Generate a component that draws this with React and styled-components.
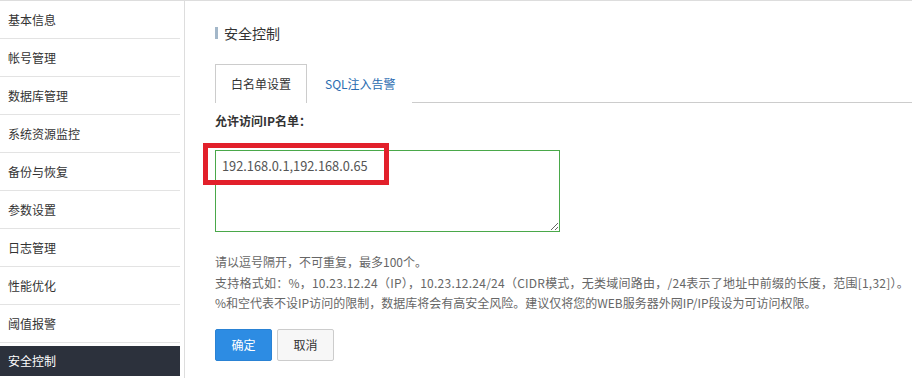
import React from 'react'
import styled, { createGlobalStyle } from 'styled-components'

const GlobalStyle = createGlobalStyle`
  body {
    margin: 0;
    background: #fff;
    font-family: 'Noto Sans CJK SC', 'Noto Sans', sans-serif;
    color: #333;
  }
`

const Page = styled.div`
  display: flex;
  width: 912px;
  border-top: 1px solid #dddddd;
  align-items: flex-start;
`

const Sidebar = styled.ul`
  list-style: none;
  margin: 0;
  padding: 0 4px 2px 0;
  width: 180px;
  border-right: 1px solid #dddddd;
`

const MenuItem = styled.li`
  height: ${(p) => (p.active ? '30px' : '37px')};
  line-height: ${(p) => (p.active ? '30px' : '37px')};
  margin-top: ${(p) => (p.active ? '3px' : '0')};
  padding-left: 8px;
  font-size: 12px;
  color: ${(p) => (p.active ? '#ffffff' : '#333333')};
  background: ${(p) => (p.active ? '#2c313c' : 'transparent')};
  border-bottom: ${(p) => (p.active ? 'none' : '1px solid #e3e3e3')};
`

const Main = styled.div`
  flex: 1;
  padding: 24px 0 0 30px;
`

const Title = styled.h2`
  margin: 0;
  display: flex;
  align-items: center;
  gap: 6px;
  font-size: 14px;
  font-weight: normal;
  line-height: 16px;
  color: #333;
  &::before {
    content: '';
    width: 3px;
    height: 12px;
    background: #a3b7c9;
  }
`

const TabBar = styled.div`
  display: flex;
  margin-top: 23px;
  border-bottom: 1px solid #cccccc;
`

const Tab = styled.div`
  height: 38px;
  line-height: 37px;
  padding: 0 15px 0 ${(p) => (p.active ? '15px' : '17px')};
  font-size: 12px;
  color: ${(p) => (p.active ? '#333333' : '#2a6cb0')};
  background: #fff;
  border: 1px solid ${(p) => (p.active ? '#cccccc' : 'transparent')};
  border-bottom: none;
  margin-bottom: -1px;
`

const Label = styled.div`
  margin-top: 10px;
  font-size: 12px;
  font-weight: bold;
  line-height: 16px;
  color: #333;
`

const Field = styled.div`
  position: relative;
  margin-top: 21px;
  width: 345px;
`

const TextArea = styled.textarea`
  display: block;
  box-sizing: border-box;
  width: 345px;
  height: 82px;
  margin: 0;
  padding: 7px 6px;
  border: 1px solid #4aa84a;
  font-family: 'Noto Sans CJK SC', 'Noto Sans', sans-serif;
  font-size: 12.8px;
  line-height: 16px;
  color: #555;
  outline: none;
`

const Highlight = styled.div`
  position: absolute;
  left: -12px;
  top: -7px;
  width: 186px;
  height: 42px;
  box-sizing: border-box;
  border: 5px solid #e2202b;
  pointer-events: none;
`

const Help = styled.div`
  margin-top: 20px;
  font-size: 12px;
  line-height: 20.5px;
  color: #666;
  white-space: nowrap;
`

const HelpLine = styled.div`
  letter-spacing: ${(p) => p.spacing || 0}px;
`

const Actions = styled.div`
  display: flex;
  gap: 5px;
  margin-top: 15px;
`

const Button = styled.button`
  width: 57px;
  height: 32px;
  padding: 0;
  font-family: 'Noto Sans CJK SC', 'Noto Sans', sans-serif;
  font-size: 12px;
  border-radius: 2px;
  cursor: pointer;
  color: ${(p) => (p.primary ? '#ffffff' : '#333333')};
  background: ${(p) => (p.primary ? '#2d8ce3' : '#f7f7f7')};
  border: 1px solid ${(p) => (p.primary ? '#2a82d4' : '#cccccc')};
`

const menu = [
  '基本信息',
  '帐号管理',
  '数据库管理',
  '系统资源监控',
  '备份与恢复',
  '参数设置',
  '日志管理',
  '性能优化',
  '阈值报警',
  '安全控制',
]

const App = () => {
  return (
    <>
      <GlobalStyle />
      <Page>
        <Sidebar>
          {menu.map((name) => (
            <MenuItem key={name} active={name === '安全控制'}>
              {name}
            </MenuItem>
          ))}
        </Sidebar>
        <Main>
          <Title>安全控制</Title>
          <TabBar>
            <Tab active>白名单设置</Tab>
            <Tab>SQL注入告警</Tab>
          </TabBar>
          <Label>允许访问IP名单：</Label>
          <Field>
            <TextArea defaultValue='192.168.0.1,192.168.0.65' />
            <Highlight />
          </Field>
          <Help>
            <HelpLine>请以逗号隔开，不可重复，最多100个。</HelpLine>
            <HelpLine spacing={0.24}>
              支持格式如：%，10.23.12.24（IP），10.23.12.24/24（CIDR模式，无类域间路由，/24表示了地址中前缀的长度，范围[1,32]）。
            </HelpLine>
            <HelpLine>
              %和空代表不设IP访问的限制，数据库将会有高安全风险。建议仅将您的WEB服务器外网IP/IP段设为可访问权限。
            </HelpLine>
          </Help>
          <Actions>
            <Button primary>确定</Button>
            <Button>取消</Button>
          </Actions>
        </Main>
      </Page>
    </>
  )
}

export default App
